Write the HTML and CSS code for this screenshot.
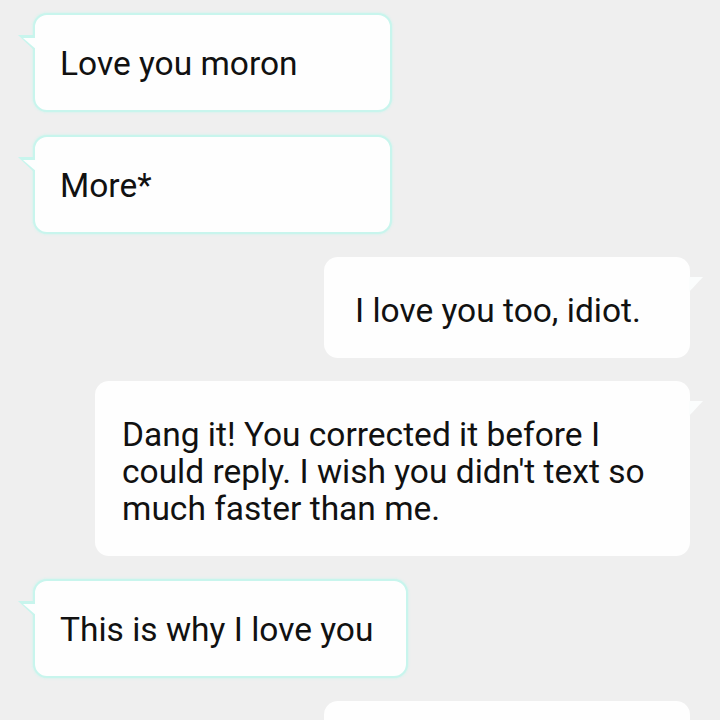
FILE: index.html
```html
<!DOCTYPE html>
<html lang="en">
<head>
<meta charset="utf-8">
<title>Messages</title>
<link rel="stylesheet" href="styles.css">
</head>
<body>
<main class="chat">
  <div class="msg in">Love you moron</div>
  <div class="msg in">More*</div>
  <div class="msg out short">I love you too, idiot.</div>
  <div class="msg out">Dang it! You corrected it before I could reply. I wish you didn't text so much faster than me.</div>
  <div class="msg in wide">This is why I love you</div>
  <div class="msg out short">&nbsp;</div>
</main>
</body>
</html>
```

FILE: styles.css
```css
html, body {
  margin: 0;
  padding: 0;
  background: #efefef;
}

body {
  height: 720px;
  overflow: hidden;
  font-family: Roboto, "Noto Sans", sans-serif;
  color: #111;
}

.chat {
  display: flex;
  flex-direction: column;
  gap: 23px;
  padding: 13px 30px 0 33px;
}

.msg {
  position: relative;
  box-sizing: border-box;
  max-width: 595px;
  font-size: 33.5px;
  line-height: 37px;
  border-radius: 14px;
  background: #fefefe;
}

/* incoming: cyan outline, tail on the upper left */
.msg.in {
  align-self: flex-start;
  min-width: 359px;
  padding: 30px 30px 28px 25px;
  border: 2px solid #c8f5ed;
  box-shadow: 0 0 3px #c8f5ed;
}

.msg.in.wide {
  padding-right: 33px;
}

.msg.in::before,
.msg.in::after {
  content: "";
  position: absolute;
  clip-path: polygon(0 0, 100% 0, 100% 100%);
}

.msg.in::before {
  left: -17px;
  top: 20px;
  width: 17px;
  height: 16px;
  background: #c8f5ed;
}

.msg.in::after {
  left: -12px;
  top: 23px;
  width: 14px;
  height: 12px;
  background: #fdfefe;
}

/* outgoing: plain white, tail on the upper right */
.msg.out {
  align-self: flex-end;
  min-width: 366px;
  padding: 35px 36px 29px 27px;
}

.msg.out.short {
  padding-left: 31px;
}

.msg.out::after {
  content: "";
  position: absolute;
  right: -13px;
  top: 20px;
  width: 14px;
  height: 15px;
  background: #fbfdfd;
  clip-path: polygon(0 0, 100% 0, 0 100%);
}
```
